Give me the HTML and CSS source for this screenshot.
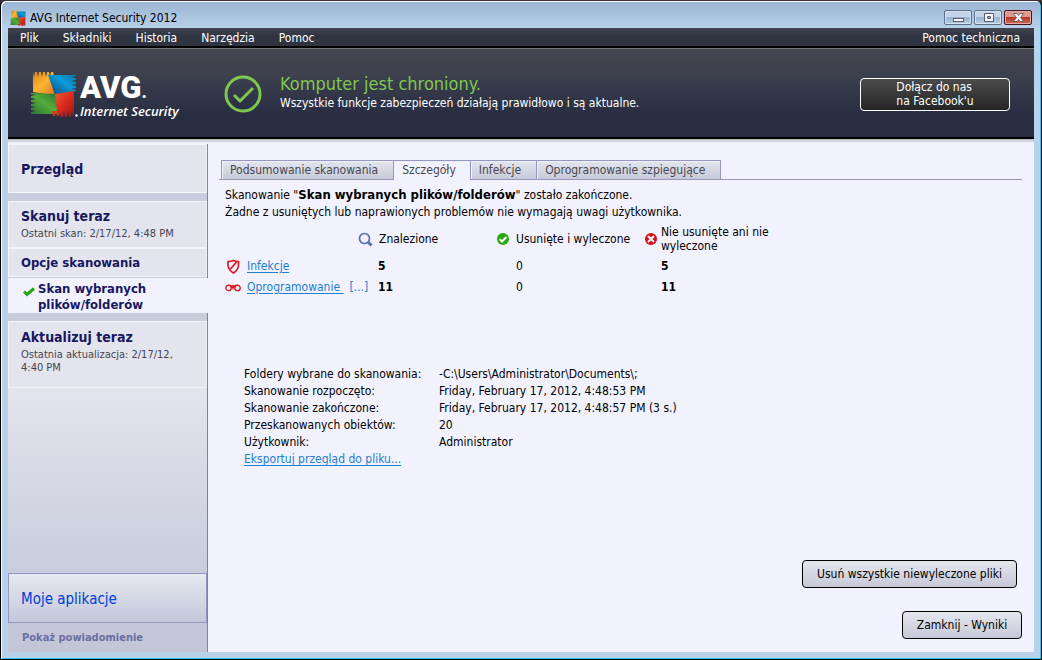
FILE: index.html
```html
<!DOCTYPE html>
<html lang="pl">
<head>
<meta charset="utf-8">
<title>AVG Internet Security 2012</title>
<link rel="stylesheet" href="styles.css">
</head>
<body>
<svg class="defs" width="0" height="0" aria-hidden="true">
  <defs>
    <linearGradient id="g-orange" x1="0" y1="0" x2="1" y2="1"><stop offset="0" stop-color="#e0801c"/><stop offset=".45" stop-color="#fdb62f"/><stop offset="1" stop-color="#d8641c"/></linearGradient>
    <linearGradient id="g-blue" x1="0" y1="1" x2="1" y2="0"><stop offset="0" stop-color="#0a4070"/><stop offset=".6" stop-color="#0d9bd8"/><stop offset="1" stop-color="#0878b4"/></linearGradient>
    <linearGradient id="g-green" x1="0" y1="1" x2="1" y2="0"><stop offset="0" stop-color="#2b7434"/><stop offset=".5" stop-color="#55ad3a"/><stop offset="1" stop-color="#256c30"/></linearGradient>
    <linearGradient id="g-red" x1="0" y1="0" x2="1" y2="1"><stop offset="0" stop-color="#f06a30"/><stop offset=".5" stop-color="#dc2c1c"/><stop offset="1" stop-color="#98161a"/></linearGradient>
    <symbol id="flag" viewBox="0 0 46 46">
      <path fill="url(#g-orange)" d="M3 1l1 5 1-5h2l1 5 1-5h2l1 5 1-5h2l1 5 1-5h2l1 5 1-5h2l1 4 4 18-2 2L3 21z"/>
      <path fill="url(#g-blue)" d="M18 4h28v1l-5 1 5 1v2l-5 1 5 1v2l-5 1 5 1v2l-5 1 5 1v1l-21 4z"/>
      <path fill="url(#g-green)" d="M1 22l24 1 5 20H1v-2l5-1-5-1v-2l5-1-5-1v-2l5-1-5-1v-2l5-1-5-1v-2l5-1-5-1z"/>
      <path fill="url(#g-red)" d="M25 23l19-3v25h-1l-1-5-1 6h-2l-1-6-1 6h-2l-1-6-1 6h-2l-1-6-1 5h-2l-1-5-1 5h-2l-1-5h5z"/>
    </symbol>
  </defs>
</svg>
<div class="window">
  <header class="titlebar">
    <svg class="app-icon" width="16" height="16"><use href="#flag"/></svg>
    <span class="title">AVG Internet Security 2012</span>
    <div class="controls">
      <button class="control" aria-label="Minimalizuj"><svg width="25" height="12" viewBox="0 0 25 12"><rect x="7.500" y="6.500" width="10" height="3" fill="#fff" stroke="#535c70"/></svg></button>
      <button class="control" aria-label="Maksymalizuj"><svg width="25" height="12" viewBox="0 0 25 12"><path fill="#fff" fill-rule="evenodd" stroke="#535c70" d="M8.500 1.500h9v8h-9zM11.500 4.500v2h3v-2z"/></svg></button>
      <button class="control close" aria-label="Zamknij"><svg width="25" height="12" viewBox="0 0 25 12"><path fill="#fff" stroke="#5b4b5c" stroke-width=".8" d="M7.500 1.500h3.500l1.500 2 1.500-2h3.500l-3 4 3 4h-3.500l-1.500-2-1.500 2H7.500l3-4z"/></svg></button>
    </div>
  </header>
  <div class="client">
    <nav class="menu">
      <button>Plik</button><button>Składniki</button><button>Historia</button><button>Narzędzia</button><button>Pomoc</button>
      <button class="support">Pomoc techniczna</button>
    </nav>
    <section class="banner">
      <div class="brand">
        <svg width="48" height="46"><use href="#flag" width="46" height="46"/><circle cx="46.500" cy="44.500" r="1.200" fill="#fff"/></svg>
        <div class="wordmark"><b>AVG<small>.</small></b><i>Internet Security</i></div>
      </div>
      <svg class="status-icon" width="38" height="38" viewBox="0 0 38 38" fill="none" stroke="#7ec850"><circle cx="19" cy="19" r="17" stroke-width="3"/><path stroke-width="3" d="M10 20l6 6 13-13"/></svg>
      <div class="status">
        <h1>Komputer jest chroniony.</h1>
        <p>Wszystkie funkcje zabezpieczeń działają prawidłowo i są aktualne.</p>
      </div>
      <button class="facebook"><span>Dołącz do nas<br>na Facebook'u</span></button>
    </section>
    <div class="body">
      <aside class="sidebar">
        <button class="item overview"><strong>Przegląd</strong></button>
        <button class="item scan"><strong>Skanuj teraz</strong><small>Ostatni skan: 2/17/12, 4:48 PM</small></button>
        <button class="item options"><strong>Opcje skanowania</strong></button>
        <button class="item current"><svg width="12" height="10" viewBox="0 0 12 10"><path fill="none" stroke="#24a80c" stroke-width="3" d="M1 4.500l3 3 7-6"/></svg><strong>Skan wybranych plików/folderów</strong></button>
        <button class="item update"><strong>Aktualizuj teraz</strong><small>Ostatnia aktualizacja: 2/17/12,<br>4:40 PM</small></button>
        <div class="filler"></div>
        <button class="apps">Moje aplikacje</button>
        <button class="notify">Pokaż powiadomienie</button>
      </aside>
      <main class="main">
        <div class="tabs" role="tablist">
          <button role="tab">Podsumowanie skanowania</button>
          <button role="tab" aria-selected="true" class="selected">Szczegóły</button>
          <button role="tab">Infekcje</button>
          <button role="tab">Oprogramowanie szpiegujące</button>
        </div>
        <div class="content">
          <p class="summary">Skanowanie "<b>Skan wybranych plików/folderów</b>" zostało zakończone.<br>Żadne z usuniętych lub naprawionych problemów nie wymagają uwagi użytkownika.</p>
          <table class="results">
            <colgroup><col class="c-name"><col class="c-found"><col class="c-removed"><col class="c-left"></colgroup>
            <thead>
              <tr>
                <td></td>
                <th scope="col"><div class="head"><svg width="15" height="15" viewBox="0 0 15 15" fill="none" stroke="#5870ac"><circle cx="6.500" cy="6.500" r="5" stroke-width="1.700"/><path stroke-width="3" d="M10.500 10.500l3 3"/></svg>Znalezione</div></th>
                <th scope="col"><div class="head"><svg width="14" height="14" viewBox="0 0 14 14"><circle cx="7" cy="7" r="6" fill="#24a80c"/><path fill="none" stroke="#fff" stroke-width="2" d="M3.500 7l2.500 2.500 4.500-4.500"/></svg>Usunięte i wyleczone</div></th>
                <th scope="col"><div class="head wide"><svg width="14" height="14" viewBox="0 0 14 14"><circle cx="7" cy="7" r="6" fill="#dd0c18"/><path stroke="#fff" stroke-width="2" d="M4 4l6 6m0-6l-6 6"/></svg><span>Nie usunięte ani nie<br>wyleczone</span></div></th>
              </tr>
            </thead>
            <tbody>
              <tr>
                <td><div class="kind"><svg width="16" height="16" viewBox="0 0 16 16" fill="none" stroke="#dc1820" stroke-width="1.700"><path d="M3 3.500Q6 3.500 8.500 2.500q2.500 1 5 1v4Q13 12 8.500 15 3.500 12 3 7.500zM5.500 11l6-7"/></svg><a href="#infekcje">Infekcje</a></div></td>
                <td><b>5</b></td><td>0</td><td class="left"><b>5</b></td>
              </tr>
              <tr>
                <td><div class="kind"><svg width="16" height="16" viewBox="0 0 16 16" fill="none" stroke="#dc1820" stroke-width="1.300"><circle cx="3.500" cy="9" r="2.700"/><circle cx="12.500" cy="9" r="2.700"/><path d="M3 6.200q4-.5 5 3 1-3.500 5-3M6 8.500l2-2 2 2"/></svg><a href="#spyware">Oprogramowanie&nbsp;</a><span class="more">[...]</span></div></td>
                <td><b>11</b></td><td>0</td><td class="left"><b>11</b></td>
              </tr>
            </tbody>
          </table>
          <dl class="details">
            <dt>Foldery wybrane do skanowania:</dt><dd>-C:\Users\Administrator\Documents\;</dd>
            <dt>Skanowanie rozpoczęto:</dt><dd>Friday, February 17, 2012, 4:48:53 PM</dd>
            <dt>Skanowanie zakończone:</dt><dd>Friday, February 17, 2012, 4:48:57 PM (3 s.)</dd>
            <dt>Przeskanowanych obiektów:</dt><dd>20</dd>
            <dt>Użytkownik:</dt><dd>Administrator</dd>
          </dl>
          <a class="export" href="#eksport">Eksportuj przegląd do pliku...</a>
        </div>
        <footer class="actions">
          <button class="action remove">Usuń wszystkie niewyleczone pliki</button>
          <button class="action">Zamknij - Wyniki</button>
        </footer>
      </main>
    </div>
  </div>
</div>
</body>
</html>
```
FILE: styles.css
```css
* { box-sizing: border-box; }
body { margin: 0; background: #383038; font: 12px/16px "DejaVu Sans Condensed", "Noto Sans", sans-serif; color: #000; }
button { margin: 0; padding: 0; border: 0; background: none; font: inherit; color: inherit; text-align: left; }
h1, p, dl, dd { margin: 0; }
svg { flex: none; display: block; }
.defs { position: absolute; }
a, .more { color: #1c7fd0; text-underline-offset: 2px; }

.window {
  display: flex; flex-direction: column; min-height: 100vh;
  padding: 1px 6px 6px;
  background: linear-gradient(#9ab4d2, #b9d1ea 28px);
  border: 1px solid #000; border-top-color: #383038;
  border-radius: 6px 6px 0 0;
  box-shadow: inset 1px 1px #fff, inset -1px -1px #28c8e8;
}
.titlebar { display: flex; align-items: center; height: 26px; padding: 5px 3px 0; gap: 4px; }
.title { flex: 1; }
.controls { display: flex; gap: 2px; }
.control {
  display: grid; place-items: center; width: 28px; height: 15px;
  border: 1px solid #5d7089; border-radius: 2px;
  background: linear-gradient(#c3d4e8 50%, #9bb4d1 50%, #b7cce3);
  box-shadow: inset 0 0 0 1px #d6e3f1;
}
.close { border-color: #431422; background: linear-gradient(#dc988c 50%, #b83a26 50%, #cf6a50); box-shadow: inset 0 0 0 1px #e2aaa2; }

.client { flex: 1; display: flex; flex-direction: column; margin: 0 1px 1px; background: #f2f2ff; }
.menu {
  display: flex; gap: 24px; height: 20px; padding: 1px 14px 0 12px; color: #fff;
  background: linear-gradient(#434451, #303440 8px);
  border-bottom: 2px solid #000;
  line-height: 18px;
}
.support { margin-left: auto; }
.banner {
  display: flex; align-items: center; height: 91px; padding: 2px 24px 0 22px; color: #fff;
  background: linear-gradient(#43454f, #3d404d 30%, #282d42 75%, #282d42);
  border-top: 1px solid #777; border-bottom: 2px solid #000;
}
.brand { display: flex; align-items: center; gap: 2px; width: 194px; }
.wordmark { display: flex; flex-direction: column; font-family: "Open Sans", sans-serif; white-space: nowrap; padding-top: 2px; }
.wordmark b { font: 900 31px/28px Roboto, sans-serif; }
.wordmark small { font-size: 18px; }
.wordmark i { font-size: 13px; line-height: 10px; font-weight: 600; }
.status { margin-left: 18px; padding-bottom: 5px; flex: 1; }
.status h1 { font-size: 18px; line-height: 22px; font-weight: 400; color: #7ec850; }
.facebook {
  display: flex; justify-content: center; align-items: center; width: 150px; height: 33px;
  border: 1px solid #fff; border-radius: 4px; line-height: 14px;
  background: linear-gradient(#4b4b4b, #252525);
}

.body { flex: 1; display: flex; background: linear-gradient(#b4b4bc, #f2f2ff 4px); }
.sidebar { display: flex; flex-direction: column; width: 200px; margin-top: 5px; background: #c9ccdc; border-right: 1px solid #7e8490; }
.item { border: 1px solid #f3f3f9; background: #e4e4ee; padding: 0 12px; color: #181860; }
.item strong { display: block; font-size: 14px; line-height: 18px; font-weight: 700; }
.item small { display: block; margin-top: 2px; font-size: 11px; line-height: 13px; color: #444450; white-space: nowrap; }
.overview { height: 49px; margin-bottom: 8px; }
.scan { height: 47px; padding-bottom: 2px; }
.options { height: 29px; }
.options strong, .current strong { font-size: 13px; line-height: 16px; }
.current { display: flex; gap: 3px; height: 35px; padding: 3px 14px 0 15px; margin-top: 1px; margin-right: -1px; border: 0; background: #f2f2ff; }
.current svg { margin-top: 6px; }
.update { height: 66px; margin-top: 8px; padding-bottom: 7px; border-bottom: 0; }
.filler { flex: 1; background: linear-gradient(#e4e4ee, #c9ccdc); border-top: 1px solid #f3f3f9; }
.apps { height: 50px; padding: 2px 12px 0; border: 1px solid #9696c4; background: linear-gradient(#e6e9f0, #c4c7da); color: #0040d8; font-size: 15px; }
.notify { height: 29px; padding: 0 14px; background: #c4c6d8; color: #6a6fa4; font-size: 11px; font-weight: 700; }

.main { flex: 1; display: flex; flex-direction: column; padding: 21px 12px 13px 11px; }
.tabs { display: flex; padding-left: 2px; height: 20px; border-bottom: 1px solid #9696c4; }
.tabs button {
  padding: 0 15px 0 8px; height: 19px; color: #484850; line-height: 19px;
  border: 1px solid #9696c4; border-width: 1px 0 0 1px;
  background: linear-gradient(#e4e6ee, #c6c9d8);
  box-shadow: inset 1px 1px #f0f0f8;
}
.tabs button:last-child { border-right-width: 1px; }
.tabs .selected { height: 20px; padding-right: 14px; background: #f2f2ff; }
.content { flex: 1; padding: 6px; }
.summary { line-height: 17px; }
.summary b { font-size: 13px; }
.results { table-layout: fixed; width: 560px; margin-top: 2px; border-collapse: collapse; }
.results td, .results th { padding: 0 0 0 20px; height: 21px; font-weight: 400; text-align: left; white-space: nowrap; }
.results b { font-weight: 700; }
.results th { height: 32px; padding: 0; line-height: 14px; }
.results td:first-child { padding: 0; }
.results .left { padding-left: 17px; }
.c-name { width: 133px; }
.c-found { width: 138px; }
.c-removed { width: 148px; }
.head { display: flex; align-items: center; gap: 6px; }
.head.wide { gap: 3px; }
.kind { display: flex; align-items: center; gap: 6px; }
.details { display: grid; grid-template-columns: 195px 1fr; line-height: 17px; margin: 69px 0 0 19px; }
.export { display: inline-block; margin-left: 19px; line-height: 17px; }
.actions { display: flex; flex-direction: column; align-items: flex-end; gap: 23px; }
.action {
  width: 120px; height: 28px; text-align: center;
  border: 1px solid #000; border-radius: 4px;
  background: linear-gradient(#e4e7ee, #c6c8d8);
}
.remove { width: 215px; margin-right: 5px; }
```
